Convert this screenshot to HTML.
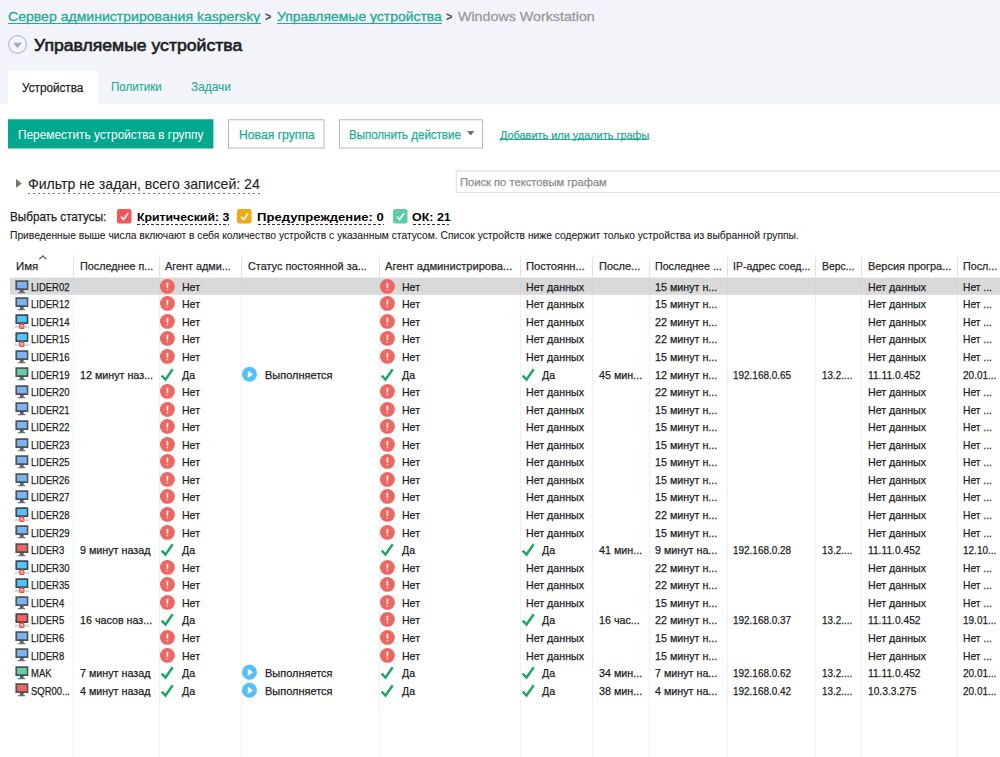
<!DOCTYPE html><html><head><meta charset="utf-8"><title>KSC</title><style>
html,body{margin:0;padding:0;}
html{width:1000px;height:757px;overflow:hidden;}
body{width:1000px;height:757px;position:relative;overflow:hidden;background:#fff;font-family:"Liberation Sans",sans-serif;}
.t{position:absolute;white-space:nowrap;line-height:1;transform-origin:0 0;-webkit-text-stroke:0.25px;}
.b{font-weight:bold;-webkit-text-stroke:0;}
.a{position:absolute;}
svg{position:absolute;overflow:visible;}
</style></head><body>

<svg width="0" height="0" style="left:0;top:0"><defs>
<g id="mon"><rect x="0.4" y="1.25" width="12.95" height="9.8" fill="#4e5459"/><rect x="4.9" y="11" width="3.7" height="2.2" fill="#5b6166"/><path d="M3.4 13.05h6.5l0.7 1.15h-7.9z" fill="#6a7075"/></g>
<g id="pc_blue"><use href="#mon"/><rect x="2.15" y="3" width="9.6" height="6.2" fill="#7ab5f0"/></g>
<g id="pc_green"><use href="#mon"/><rect x="2.15" y="3" width="9.6" height="6.2" fill="#62d0a4"/></g>
<g id="pc_red"><use href="#mon"/><rect x="2.15" y="3" width="9.6" height="6.2" fill="#f3625f"/></g>
<g id="monx"><rect x="0.4" y="0.2" width="12.95" height="9.85" rx="0.9" fill="#3b4751"/><rect x="-0.4" y="11.5" width="14.8" height="2.6" fill="#c3dbe6"/><rect x="-0.4" y="12.5" width="14.8" height="0.6" fill="#d9e8ef"/><rect x="4.1" y="9.5" width="5.3" height="5.5" rx="0.9" fill="#f0574a"/><path d="M5.5 11l2.5 2.5m0-2.5l-2.5 2.5" stroke="#fff" stroke-width="1" fill="none"/></g>
<g id="pc_bluex"><use href="#monx"/><rect x="2.1" y="1.95" width="9.65" height="6.35" fill="#50c3fb"/></g>
<g id="pc_redx"><use href="#monx"/><rect x="2.1" y="1.95" width="9.65" height="6.35" fill="#f0635e"/></g>
<g id="err"><circle cx="7.4" cy="7.4" r="7.45" fill="#ec6761"/><rect x="6.6" y="3.8" width="1.6" height="5" rx="0.5" fill="#fff"/><rect x="6.6" y="9.9" width="1.6" height="1.3" rx="0.5" fill="#fff"/></g>
<g id="ok"><path d="M1.7 8.6 L5.5 12.5 L12.7 2.2" stroke="#1aa75f" stroke-width="2.4" fill="none"/></g>
<g id="play"><circle cx="7.5" cy="7.3" r="7.5" fill="#52c0fb"/><path d="M5.8 3.7 L11.2 7.3 L5.8 10.9 Z" fill="#fff"/></g>
<g id="chk"><path d="M4 7.7 L6.6 10.4 L11.1 4.1" stroke="#fff" stroke-width="1.6" fill="none"/></g>
</defs></svg>

<svg style="left:0;top:0" width="1000" height="757" shape-rendering="geometricPrecision"><rect x="0" y="0" width="1000" height="104.4" fill="#f2f4f9"/><rect x="8" y="70.9" width="89.8" height="34" fill="#fff"/><rect x="8" y="119.25" width="205.4" height="29.25" fill="#00a88e"/><rect x="228.5" y="119.75" width="95.5" height="28.25" fill="#fff" stroke="#b1b8c3" stroke-width="1"/><rect x="339.5" y="119.75" width="143" height="28.25" fill="#fff" stroke="#b1b8c3" stroke-width="1"/><rect x="456.25" y="171" width="560" height="21.5" fill="#fff" stroke="#d9dce0" stroke-width="1"/><rect x="10" y="277.6" width="990" height="17.2" fill="#d9d9d9"/></svg>
<svg style="left:8px;top:34.7px" width="19" height="19"><circle cx="9.5" cy="9.5" r="8.9" fill="#f4f5fa" stroke="#b3bac4" stroke-width="1.1"/><path d="M5.1 7.8 h8.8 l-4.4 5.2z" fill="#a2a9b2"/></svg>
<div class="a" style="left:500px;top:139.4px;width:148.5px;height:1px;background:#22ab95"></div>
<div class="a" style="left:8px;top:22.9px;width:252.5px;height:1.1px;background:#22ab95"></div>
<div class="a" style="left:276.5px;top:22.9px;width:165.0px;height:1.1px;background:#22ab95"></div>
<svg style="left:466.5px;top:131.2px" width="8" height="6"><path d="M0 0h7.4l-3.7 4.6z" fill="#6a6d73"/></svg>
<svg style="left:15.7px;top:179.2px" width="6" height="9"><path d="M0 0v8.8l5.9-4.4z" fill="#737373"/></svg>
<div class="a" style="left:27.8px;top:192.6px;width:234px;height:1.3px;background:repeating-linear-gradient(90deg,#7a7a7a 0,#7a7a7a 2.5px,transparent 2.5px,transparent 5px)"></div>
<svg style="left:117.4px;top:209.3px" width="15" height="15"><rect width="14.5" height="14.5" rx="2.2" fill="#f0565a"/><use href="#chk"/></svg>
<svg style="left:237.4px;top:209.3px" width="15" height="15"><rect width="14.5" height="14.5" rx="2.2" fill="#eaa917"/><use href="#chk"/></svg>
<svg style="left:393px;top:209.3px" width="15" height="15"><rect width="14.5" height="14.5" rx="2.2" fill="#5ecba9"/><use href="#chk"/></svg>
<div class="a" style="left:137px;top:224px;width:91.5px;height:1px;background:repeating-linear-gradient(90deg,#333 0,#333 2.8px,transparent 2.8px,transparent 4.8px)"></div>
<div class="a" style="left:257.5px;top:224px;width:126.0px;height:1px;background:repeating-linear-gradient(90deg,#333 0,#333 2.8px,transparent 2.8px,transparent 4.8px)"></div>
<div class="a" style="left:412.5px;top:224px;width:38.0px;height:1px;background:repeating-linear-gradient(90deg,#333 0,#333 2.8px,transparent 2.8px,transparent 4.8px)"></div>
<div class="a" style="left:73px;top:255px;width:1px;height:22.6px;background:linear-gradient(#f4f4f4,#e2e2e2 30%,#e0e0e0)"></div>
<div class="a" style="left:73px;top:277.6px;width:1px;height:17.2px;background:#ccd6e3"></div>
<div class="a" style="left:73px;top:294.8px;width:1px;height:462.2px;background:#ebf1fb"></div>
<div class="a" style="left:159px;top:255px;width:1px;height:22.6px;background:linear-gradient(#f4f4f4,#e2e2e2 30%,#e0e0e0)"></div>
<div class="a" style="left:159px;top:277.6px;width:1px;height:17.2px;background:#ccd6e3"></div>
<div class="a" style="left:159px;top:294.8px;width:1px;height:462.2px;background:#ebf1fb"></div>
<div class="a" style="left:241px;top:255px;width:1px;height:22.6px;background:linear-gradient(#f4f4f4,#e2e2e2 30%,#e0e0e0)"></div>
<div class="a" style="left:241px;top:277.6px;width:1px;height:17.2px;background:#ccd6e3"></div>
<div class="a" style="left:241px;top:294.8px;width:1px;height:462.2px;background:#ebf1fb"></div>
<div class="a" style="left:379px;top:255px;width:1px;height:22.6px;background:linear-gradient(#f4f4f4,#e2e2e2 30%,#e0e0e0)"></div>
<div class="a" style="left:379px;top:277.6px;width:1px;height:17.2px;background:#ccd6e3"></div>
<div class="a" style="left:379px;top:294.8px;width:1px;height:462.2px;background:#ebf1fb"></div>
<div class="a" style="left:520px;top:255px;width:1px;height:22.6px;background:linear-gradient(#f4f4f4,#e2e2e2 30%,#e0e0e0)"></div>
<div class="a" style="left:520px;top:277.6px;width:1px;height:17.2px;background:#ccd6e3"></div>
<div class="a" style="left:520px;top:294.8px;width:1px;height:462.2px;background:#ebf1fb"></div>
<div class="a" style="left:592px;top:255px;width:1px;height:22.6px;background:linear-gradient(#f4f4f4,#e2e2e2 30%,#e0e0e0)"></div>
<div class="a" style="left:592px;top:277.6px;width:1px;height:17.2px;background:#ccd6e3"></div>
<div class="a" style="left:592px;top:294.8px;width:1px;height:462.2px;background:#ebf1fb"></div>
<div class="a" style="left:649px;top:255px;width:1px;height:22.6px;background:linear-gradient(#f4f4f4,#e2e2e2 30%,#e0e0e0)"></div>
<div class="a" style="left:649px;top:277.6px;width:1px;height:17.2px;background:#ccd6e3"></div>
<div class="a" style="left:649px;top:294.8px;width:1px;height:462.2px;background:#ebf1fb"></div>
<div class="a" style="left:727px;top:255px;width:1px;height:22.6px;background:linear-gradient(#f4f4f4,#e2e2e2 30%,#e0e0e0)"></div>
<div class="a" style="left:727px;top:277.6px;width:1px;height:17.2px;background:#ccd6e3"></div>
<div class="a" style="left:727px;top:294.8px;width:1px;height:462.2px;background:#ebf1fb"></div>
<div class="a" style="left:815px;top:255px;width:1px;height:22.6px;background:linear-gradient(#f4f4f4,#e2e2e2 30%,#e0e0e0)"></div>
<div class="a" style="left:815px;top:277.6px;width:1px;height:17.2px;background:#ccd6e3"></div>
<div class="a" style="left:815px;top:294.8px;width:1px;height:462.2px;background:#ebf1fb"></div>
<div class="a" style="left:861px;top:255px;width:1px;height:22.6px;background:linear-gradient(#f4f4f4,#e2e2e2 30%,#e0e0e0)"></div>
<div class="a" style="left:861px;top:277.6px;width:1px;height:17.2px;background:#ccd6e3"></div>
<div class="a" style="left:861px;top:294.8px;width:1px;height:462.2px;background:#ebf1fb"></div>
<div class="a" style="left:957px;top:255px;width:1px;height:22.6px;background:linear-gradient(#f4f4f4,#e2e2e2 30%,#e0e0e0)"></div>
<div class="a" style="left:957px;top:277.6px;width:1px;height:17.2px;background:#ccd6e3"></div>
<div class="a" style="left:957px;top:294.8px;width:1px;height:462.2px;background:#ebf1fb"></div>
<svg style="left:38.5px;top:254.8px" width="8" height="5"><path d="M0.3 4.3 L3.8 0.8 L7.3 4.3" stroke="#5c5c5c" stroke-width="1.25" fill="none"/></svg>
<svg style="left:14.5px;top:278.50px" width="15" height="15"><use href="#pc_blue"/></svg>
<svg style="left:160px;top:278.70px" width="15" height="15"><use href="#err"/></svg>
<svg style="left:380px;top:278.70px" width="15" height="15"><use href="#err"/></svg>
<svg style="left:14.5px;top:296.06px" width="15" height="15"><use href="#pc_blue"/></svg>
<svg style="left:160px;top:296.26px" width="15" height="15"><use href="#err"/></svg>
<svg style="left:380px;top:296.26px" width="15" height="15"><use href="#err"/></svg>
<svg style="left:14.5px;top:314.13px" width="15" height="15"><use href="#pc_bluex"/></svg>
<svg style="left:160px;top:313.83px" width="15" height="15"><use href="#err"/></svg>
<svg style="left:380px;top:313.83px" width="15" height="15"><use href="#err"/></svg>
<svg style="left:14.5px;top:331.69px" width="15" height="15"><use href="#pc_bluex"/></svg>
<svg style="left:160px;top:331.39px" width="15" height="15"><use href="#err"/></svg>
<svg style="left:380px;top:331.39px" width="15" height="15"><use href="#err"/></svg>
<svg style="left:14.5px;top:348.76px" width="15" height="15"><use href="#pc_blue"/></svg>
<svg style="left:160px;top:348.96px" width="15" height="15"><use href="#err"/></svg>
<svg style="left:380px;top:348.96px" width="15" height="15"><use href="#err"/></svg>
<svg style="left:14.5px;top:366.32px" width="15" height="15"><use href="#pc_green"/></svg>
<svg style="left:160px;top:366.52px" width="15" height="15"><use href="#ok"/></svg>
<svg style="left:242px;top:366.52px" width="15" height="15"><use href="#play"/></svg>
<svg style="left:380px;top:366.52px" width="15" height="15"><use href="#ok"/></svg>
<svg style="left:520.5px;top:366.52px" width="15" height="15"><use href="#ok"/></svg>
<svg style="left:14.5px;top:383.89px" width="15" height="15"><use href="#pc_blue"/></svg>
<svg style="left:160px;top:384.09px" width="15" height="15"><use href="#err"/></svg>
<svg style="left:380px;top:384.09px" width="15" height="15"><use href="#err"/></svg>
<svg style="left:14.5px;top:401.45px" width="15" height="15"><use href="#pc_blue"/></svg>
<svg style="left:160px;top:401.65px" width="15" height="15"><use href="#err"/></svg>
<svg style="left:380px;top:401.65px" width="15" height="15"><use href="#err"/></svg>
<svg style="left:14.5px;top:419.02px" width="15" height="15"><use href="#pc_blue"/></svg>
<svg style="left:160px;top:419.22px" width="15" height="15"><use href="#err"/></svg>
<svg style="left:380px;top:419.22px" width="15" height="15"><use href="#err"/></svg>
<svg style="left:14.5px;top:436.58px" width="15" height="15"><use href="#pc_blue"/></svg>
<svg style="left:160px;top:436.78px" width="15" height="15"><use href="#err"/></svg>
<svg style="left:380px;top:436.78px" width="15" height="15"><use href="#err"/></svg>
<svg style="left:14.5px;top:454.15px" width="15" height="15"><use href="#pc_blue"/></svg>
<svg style="left:160px;top:454.35px" width="15" height="15"><use href="#err"/></svg>
<svg style="left:380px;top:454.35px" width="15" height="15"><use href="#err"/></svg>
<svg style="left:14.5px;top:471.71px" width="15" height="15"><use href="#pc_blue"/></svg>
<svg style="left:160px;top:471.91px" width="15" height="15"><use href="#err"/></svg>
<svg style="left:380px;top:471.91px" width="15" height="15"><use href="#err"/></svg>
<svg style="left:14.5px;top:489.28px" width="15" height="15"><use href="#pc_blue"/></svg>
<svg style="left:160px;top:489.48px" width="15" height="15"><use href="#err"/></svg>
<svg style="left:380px;top:489.48px" width="15" height="15"><use href="#err"/></svg>
<svg style="left:14.5px;top:507.35px" width="15" height="15"><use href="#pc_bluex"/></svg>
<svg style="left:160px;top:507.05px" width="15" height="15"><use href="#err"/></svg>
<svg style="left:380px;top:507.05px" width="15" height="15"><use href="#err"/></svg>
<svg style="left:14.5px;top:524.41px" width="15" height="15"><use href="#pc_blue"/></svg>
<svg style="left:160px;top:524.61px" width="15" height="15"><use href="#err"/></svg>
<svg style="left:380px;top:524.61px" width="15" height="15"><use href="#err"/></svg>
<svg style="left:14.5px;top:541.97px" width="15" height="15"><use href="#pc_red"/></svg>
<svg style="left:160px;top:542.17px" width="15" height="15"><use href="#ok"/></svg>
<svg style="left:380px;top:542.17px" width="15" height="15"><use href="#ok"/></svg>
<svg style="left:520.5px;top:542.17px" width="15" height="15"><use href="#ok"/></svg>
<svg style="left:14.5px;top:560.04px" width="15" height="15"><use href="#pc_bluex"/></svg>
<svg style="left:160px;top:559.74px" width="15" height="15"><use href="#err"/></svg>
<svg style="left:380px;top:559.74px" width="15" height="15"><use href="#err"/></svg>
<svg style="left:14.5px;top:577.61px" width="15" height="15"><use href="#pc_bluex"/></svg>
<svg style="left:160px;top:577.31px" width="15" height="15"><use href="#err"/></svg>
<svg style="left:380px;top:577.31px" width="15" height="15"><use href="#err"/></svg>
<svg style="left:14.5px;top:594.67px" width="15" height="15"><use href="#pc_blue"/></svg>
<svg style="left:160px;top:594.87px" width="15" height="15"><use href="#err"/></svg>
<svg style="left:380px;top:594.87px" width="15" height="15"><use href="#err"/></svg>
<svg style="left:14.5px;top:612.73px" width="15" height="15"><use href="#pc_redx"/></svg>
<svg style="left:160px;top:612.43px" width="15" height="15"><use href="#ok"/></svg>
<svg style="left:380px;top:612.43px" width="15" height="15"><use href="#err"/></svg>
<svg style="left:520.5px;top:612.43px" width="15" height="15"><use href="#ok"/></svg>
<svg style="left:14.5px;top:629.80px" width="15" height="15"><use href="#pc_blue"/></svg>
<svg style="left:160px;top:630.00px" width="15" height="15"><use href="#err"/></svg>
<svg style="left:380px;top:630.00px" width="15" height="15"><use href="#err"/></svg>
<svg style="left:14.5px;top:647.37px" width="15" height="15"><use href="#pc_blue"/></svg>
<svg style="left:160px;top:647.57px" width="15" height="15"><use href="#err"/></svg>
<svg style="left:380px;top:647.57px" width="15" height="15"><use href="#err"/></svg>
<svg style="left:14.5px;top:664.93px" width="15" height="15"><use href="#pc_green"/></svg>
<svg style="left:160px;top:665.13px" width="15" height="15"><use href="#ok"/></svg>
<svg style="left:242px;top:665.13px" width="15" height="15"><use href="#play"/></svg>
<svg style="left:380px;top:665.13px" width="15" height="15"><use href="#ok"/></svg>
<svg style="left:520.5px;top:665.13px" width="15" height="15"><use href="#ok"/></svg>
<svg style="left:14.5px;top:682.49px" width="15" height="15"><use href="#pc_red"/></svg>
<svg style="left:160px;top:682.69px" width="15" height="15"><use href="#ok"/></svg>
<svg style="left:242px;top:682.69px" width="15" height="15"><use href="#play"/></svg>
<svg style="left:380px;top:682.69px" width="15" height="15"><use href="#ok"/></svg>
<svg style="left:520.5px;top:682.69px" width="15" height="15"><use href="#ok"/></svg>
<span class="t" style="left:8.20px;top:9.81px;font-size:13.6px;color:#22ab95;transform:scaleX(1.0345);-webkit-text-stroke:0.3px;">Сервер администрирования kaspersky</span>
<span class="t b" style="left:265.10px;top:10.60px;font-size:12.5px;color:#4a4a4a;transform:scaleX(0.8615);">></span>
<span class="t" style="left:276.60px;top:9.81px;font-size:13.6px;color:#22ab95;transform:scaleX(1.0251);-webkit-text-stroke:0.3px;">Управляемые устройства</span>
<span class="t b" style="left:446.10px;top:10.60px;font-size:12.5px;color:#4a4a4a;transform:scaleX(0.8615);">></span>
<span class="t" style="left:457.60px;top:9.81px;font-size:13.6px;color:#9a9a9a;transform:scaleX(1.0487);-webkit-text-stroke:0.3px;">Windows Workstation</span>
<span class="t" style="left:34.20px;top:37.81px;font-size:16px;color:#1e1e1e;transform:scaleX(1.1003);-webkit-text-stroke:0.6px;">Управляемые устройства</span>
<span class="t" style="left:22.10px;top:82.30px;font-size:12.5px;color:#1e1e1e;transform:scaleX(0.9372);">Устройства</span>
<span class="t" style="left:110.60px;top:81.01px;font-size:12.5px;color:#22ab95;transform:scaleX(0.9218);-webkit-text-stroke:0.1px;">Политики</span>
<span class="t" style="left:190.60px;top:81.01px;font-size:12.5px;color:#22ab95;transform:scaleX(0.9483);-webkit-text-stroke:0.1px;">Задачи</span>
<span class="t" style="left:18.10px;top:129.10px;font-size:12.5px;color:#ffffff;transform:scaleX(0.9481);-webkit-text-stroke:0;">Переместить устройства в группу</span>
<span class="t" style="left:238.60px;top:129.21px;font-size:12.5px;color:#22ab95;transform:scaleX(0.9743);">Новая группа</span>
<span class="t" style="left:349.10px;top:129.21px;font-size:12.5px;color:#22ab95;transform:scaleX(0.9206);">Выполнить действие</span>
<span class="t" style="left:499.60px;top:129.61px;font-size:11.5px;color:#22ab95;transform:scaleX(0.9477);">Добавить или удалить графы</span>
<span class="t" style="left:27.60px;top:177.00px;font-size:14.3px;color:#1e1e1e;transform:scaleX(0.9864);-webkit-text-stroke:0.1px;">Фильтр не задан, всего записей: 24</span>
<span class="t" style="left:459.60px;top:176.50px;font-size:11.5px;color:#8c8c8c;transform:scaleX(0.9716);">Поиск по текстовым графам</span>
<span class="t" style="left:9.60px;top:210.51px;font-size:12px;color:#1e1e1e;transform:scaleX(0.9736);">Выбрать статусы:</span>
<span class="t b" style="left:136.60px;top:211.50px;font-size:11.5px;color:#000;transform:scaleX(1.0676);">Критический: 3</span>
<span class="t b" style="left:257.10px;top:211.50px;font-size:11.5px;color:#000;transform:scaleX(1.1380);">Предупреждение: 0</span>
<span class="t b" style="left:412.10px;top:211.50px;font-size:11.5px;color:#000;transform:scaleX(1.0844);">ОК: 21</span>
<span class="t" style="left:9.60px;top:230.71px;font-size:10.3px;color:#1e1e1e;transform:scaleX(0.9990);-webkit-text-stroke:0.1px;">Приведенные выше числа включают в себя количество устройств с указанным статусом. Список устройств ниже содержит только устройства из выбранной группы.</span>
<span class="t" style="left:15.60px;top:260.21px;font-size:11.6px;color:#2a2a2a;transform:scaleX(0.9870);">Имя</span>
<span class="t" style="left:79.60px;top:260.21px;font-size:11.6px;color:#2a2a2a;transform:scaleX(0.9306);">Последнее п...</span>
<span class="t" style="left:165.10px;top:260.21px;font-size:11.6px;color:#2a2a2a;transform:scaleX(0.9344);">Агент адми...</span>
<span class="t" style="left:247.60px;top:260.21px;font-size:11.6px;color:#2a2a2a;transform:scaleX(0.9377);">Статус постоянной за...</span>
<span class="t" style="left:385.10px;top:260.21px;font-size:11.6px;color:#2a2a2a;transform:scaleX(0.9593);">Агент администрирова...</span>
<span class="t" style="left:525.60px;top:260.21px;font-size:11.6px;color:#2a2a2a;transform:scaleX(0.9647);">Постоянн...</span>
<span class="t" style="left:598.60px;top:260.21px;font-size:11.6px;color:#2a2a2a;transform:scaleX(0.9501);">После...</span>
<span class="t" style="left:655.10px;top:260.21px;font-size:11.6px;color:#2a2a2a;transform:scaleX(0.9216);">Последнее ...</span>
<span class="t" style="left:732.60px;top:260.21px;font-size:11.6px;color:#2a2a2a;transform:scaleX(0.9099);">IP-адрес соед...</span>
<span class="t" style="left:821.60px;top:260.21px;font-size:11.6px;color:#2a2a2a;transform:scaleX(0.8949);">Верс...</span>
<span class="t" style="left:867.60px;top:260.21px;font-size:11.6px;color:#2a2a2a;transform:scaleX(0.9426);">Версия програ...</span>
<span class="t" style="left:963.10px;top:260.21px;font-size:11.6px;color:#2a2a2a;transform:scaleX(0.9266);">Посл...</span>
<span class="t" style="left:30.80px;top:280.71px;font-size:11.6px;color:#1c1c1c;transform:scaleX(0.8180);">LIDER02</span>
<span class="t" style="left:182.10px;top:280.71px;font-size:11.6px;color:#1c1c1c;transform:scaleX(0.9100);">Нет</span>
<span class="t" style="left:402.10px;top:280.71px;font-size:11.6px;color:#1c1c1c;transform:scaleX(0.9100);">Нет</span>
<span class="t" style="left:525.60px;top:280.71px;font-size:11.6px;color:#1c1c1c;transform:scaleX(0.9190);">Нет данных</span>
<span class="t" style="left:655.10px;top:280.71px;font-size:11.6px;color:#1c1c1c;transform:scaleX(0.9250);">15 минут н...</span>
<span class="t" style="left:867.60px;top:280.71px;font-size:11.6px;color:#1c1c1c;transform:scaleX(0.9190);">Нет данных</span>
<span class="t" style="left:963.10px;top:280.71px;font-size:11.6px;color:#1c1c1c;transform:scaleX(0.8850);">Нет ...</span>
<span class="t" style="left:30.80px;top:298.27px;font-size:11.6px;color:#1c1c1c;transform:scaleX(0.8180);">LIDER12</span>
<span class="t" style="left:182.10px;top:298.27px;font-size:11.6px;color:#1c1c1c;transform:scaleX(0.9100);">Нет</span>
<span class="t" style="left:402.10px;top:298.27px;font-size:11.6px;color:#1c1c1c;transform:scaleX(0.9100);">Нет</span>
<span class="t" style="left:525.60px;top:298.27px;font-size:11.6px;color:#1c1c1c;transform:scaleX(0.9190);">Нет данных</span>
<span class="t" style="left:655.10px;top:298.27px;font-size:11.6px;color:#1c1c1c;transform:scaleX(0.9250);">15 минут н...</span>
<span class="t" style="left:867.60px;top:298.27px;font-size:11.6px;color:#1c1c1c;transform:scaleX(0.9190);">Нет данных</span>
<span class="t" style="left:963.10px;top:298.27px;font-size:11.6px;color:#1c1c1c;transform:scaleX(0.8850);">Нет ...</span>
<span class="t" style="left:30.80px;top:315.84px;font-size:11.6px;color:#1c1c1c;transform:scaleX(0.8180);">LIDER14</span>
<span class="t" style="left:182.10px;top:315.84px;font-size:11.6px;color:#1c1c1c;transform:scaleX(0.9100);">Нет</span>
<span class="t" style="left:402.10px;top:315.84px;font-size:11.6px;color:#1c1c1c;transform:scaleX(0.9100);">Нет</span>
<span class="t" style="left:525.60px;top:315.84px;font-size:11.6px;color:#1c1c1c;transform:scaleX(0.9190);">Нет данных</span>
<span class="t" style="left:655.10px;top:315.84px;font-size:11.6px;color:#1c1c1c;transform:scaleX(0.9250);">22 минут н...</span>
<span class="t" style="left:867.60px;top:315.84px;font-size:11.6px;color:#1c1c1c;transform:scaleX(0.9190);">Нет данных</span>
<span class="t" style="left:963.10px;top:315.84px;font-size:11.6px;color:#1c1c1c;transform:scaleX(0.8850);">Нет ...</span>
<span class="t" style="left:30.80px;top:333.39px;font-size:11.6px;color:#1c1c1c;transform:scaleX(0.8180);">LIDER15</span>
<span class="t" style="left:182.10px;top:333.39px;font-size:11.6px;color:#1c1c1c;transform:scaleX(0.9100);">Нет</span>
<span class="t" style="left:402.10px;top:333.39px;font-size:11.6px;color:#1c1c1c;transform:scaleX(0.9100);">Нет</span>
<span class="t" style="left:525.60px;top:333.39px;font-size:11.6px;color:#1c1c1c;transform:scaleX(0.9190);">Нет данных</span>
<span class="t" style="left:655.10px;top:333.39px;font-size:11.6px;color:#1c1c1c;transform:scaleX(0.9250);">22 минут н...</span>
<span class="t" style="left:867.60px;top:333.39px;font-size:11.6px;color:#1c1c1c;transform:scaleX(0.9190);">Нет данных</span>
<span class="t" style="left:963.10px;top:333.39px;font-size:11.6px;color:#1c1c1c;transform:scaleX(0.8850);">Нет ...</span>
<span class="t" style="left:30.80px;top:350.98px;font-size:11.6px;color:#1c1c1c;transform:scaleX(0.8180);">LIDER16</span>
<span class="t" style="left:182.10px;top:350.98px;font-size:11.6px;color:#1c1c1c;transform:scaleX(0.9100);">Нет</span>
<span class="t" style="left:402.10px;top:350.98px;font-size:11.6px;color:#1c1c1c;transform:scaleX(0.9100);">Нет</span>
<span class="t" style="left:525.60px;top:350.98px;font-size:11.6px;color:#1c1c1c;transform:scaleX(0.9190);">Нет данных</span>
<span class="t" style="left:655.10px;top:350.98px;font-size:11.6px;color:#1c1c1c;transform:scaleX(0.9250);">15 минут н...</span>
<span class="t" style="left:867.60px;top:350.98px;font-size:11.6px;color:#1c1c1c;transform:scaleX(0.9190);">Нет данных</span>
<span class="t" style="left:963.10px;top:350.98px;font-size:11.6px;color:#1c1c1c;transform:scaleX(0.8850);">Нет ...</span>
<span class="t" style="left:30.80px;top:368.53px;font-size:11.6px;color:#1c1c1c;transform:scaleX(0.8180);">LIDER19</span>
<span class="t" style="left:79.60px;top:368.53px;font-size:11.6px;color:#1c1c1c;transform:scaleX(0.9250);">12 минут наз...</span>
<span class="t" style="left:182.10px;top:368.53px;font-size:11.6px;color:#1c1c1c;transform:scaleX(0.9100);">Да</span>
<span class="t" style="left:264.60px;top:368.53px;font-size:11.6px;color:#1c1c1c;transform:scaleX(0.9460);">Выполняется</span>
<span class="t" style="left:402.10px;top:368.53px;font-size:11.6px;color:#1c1c1c;transform:scaleX(0.9100);">Да</span>
<span class="t" style="left:542.10px;top:368.53px;font-size:11.6px;color:#1c1c1c;transform:scaleX(0.9100);">Да</span>
<span class="t" style="left:598.60px;top:368.53px;font-size:11.6px;color:#1c1c1c;transform:scaleX(0.9250);">45 мин...</span>
<span class="t" style="left:655.10px;top:368.53px;font-size:11.6px;color:#1c1c1c;transform:scaleX(0.9250);">12 минут н...</span>
<span class="t" style="left:733.10px;top:368.53px;font-size:11.6px;color:#1c1c1c;transform:scaleX(0.8580);">192.168.0.65</span>
<span class="t" style="left:822.10px;top:368.53px;font-size:11.6px;color:#1c1c1c;transform:scaleX(0.8500);">13.2....</span>
<span class="t" style="left:867.60px;top:368.53px;font-size:11.6px;color:#1c1c1c;transform:scaleX(0.8820);">11.11.0.452</span>
<span class="t" style="left:963.10px;top:368.53px;font-size:11.6px;color:#1c1c1c;transform:scaleX(0.8620);">20.01...</span>
<span class="t" style="left:30.80px;top:386.09px;font-size:11.6px;color:#1c1c1c;transform:scaleX(0.8180);">LIDER20</span>
<span class="t" style="left:182.10px;top:386.09px;font-size:11.6px;color:#1c1c1c;transform:scaleX(0.9100);">Нет</span>
<span class="t" style="left:402.10px;top:386.09px;font-size:11.6px;color:#1c1c1c;transform:scaleX(0.9100);">Нет</span>
<span class="t" style="left:525.60px;top:386.09px;font-size:11.6px;color:#1c1c1c;transform:scaleX(0.9190);">Нет данных</span>
<span class="t" style="left:655.10px;top:386.09px;font-size:11.6px;color:#1c1c1c;transform:scaleX(0.9250);">22 минут н...</span>
<span class="t" style="left:867.60px;top:386.09px;font-size:11.6px;color:#1c1c1c;transform:scaleX(0.9190);">Нет данных</span>
<span class="t" style="left:963.10px;top:386.09px;font-size:11.6px;color:#1c1c1c;transform:scaleX(0.8850);">Нет ...</span>
<span class="t" style="left:30.80px;top:403.66px;font-size:11.6px;color:#1c1c1c;transform:scaleX(0.8180);">LIDER21</span>
<span class="t" style="left:182.10px;top:403.66px;font-size:11.6px;color:#1c1c1c;transform:scaleX(0.9100);">Нет</span>
<span class="t" style="left:402.10px;top:403.66px;font-size:11.6px;color:#1c1c1c;transform:scaleX(0.9100);">Нет</span>
<span class="t" style="left:525.60px;top:403.66px;font-size:11.6px;color:#1c1c1c;transform:scaleX(0.9190);">Нет данных</span>
<span class="t" style="left:655.10px;top:403.66px;font-size:11.6px;color:#1c1c1c;transform:scaleX(0.9250);">15 минут н...</span>
<span class="t" style="left:867.60px;top:403.66px;font-size:11.6px;color:#1c1c1c;transform:scaleX(0.9190);">Нет данных</span>
<span class="t" style="left:963.10px;top:403.66px;font-size:11.6px;color:#1c1c1c;transform:scaleX(0.8850);">Нет ...</span>
<span class="t" style="left:30.80px;top:421.23px;font-size:11.6px;color:#1c1c1c;transform:scaleX(0.8180);">LIDER22</span>
<span class="t" style="left:182.10px;top:421.23px;font-size:11.6px;color:#1c1c1c;transform:scaleX(0.9100);">Нет</span>
<span class="t" style="left:402.10px;top:421.23px;font-size:11.6px;color:#1c1c1c;transform:scaleX(0.9100);">Нет</span>
<span class="t" style="left:525.60px;top:421.23px;font-size:11.6px;color:#1c1c1c;transform:scaleX(0.9190);">Нет данных</span>
<span class="t" style="left:655.10px;top:421.23px;font-size:11.6px;color:#1c1c1c;transform:scaleX(0.9250);">15 минут н...</span>
<span class="t" style="left:867.60px;top:421.23px;font-size:11.6px;color:#1c1c1c;transform:scaleX(0.9190);">Нет данных</span>
<span class="t" style="left:963.10px;top:421.23px;font-size:11.6px;color:#1c1c1c;transform:scaleX(0.8850);">Нет ...</span>
<span class="t" style="left:30.80px;top:438.78px;font-size:11.6px;color:#1c1c1c;transform:scaleX(0.8180);">LIDER23</span>
<span class="t" style="left:182.10px;top:438.78px;font-size:11.6px;color:#1c1c1c;transform:scaleX(0.9100);">Нет</span>
<span class="t" style="left:402.10px;top:438.78px;font-size:11.6px;color:#1c1c1c;transform:scaleX(0.9100);">Нет</span>
<span class="t" style="left:525.60px;top:438.78px;font-size:11.6px;color:#1c1c1c;transform:scaleX(0.9190);">Нет данных</span>
<span class="t" style="left:655.10px;top:438.78px;font-size:11.6px;color:#1c1c1c;transform:scaleX(0.9250);">15 минут н...</span>
<span class="t" style="left:867.60px;top:438.78px;font-size:11.6px;color:#1c1c1c;transform:scaleX(0.9190);">Нет данных</span>
<span class="t" style="left:963.10px;top:438.78px;font-size:11.6px;color:#1c1c1c;transform:scaleX(0.8850);">Нет ...</span>
<span class="t" style="left:30.80px;top:456.36px;font-size:11.6px;color:#1c1c1c;transform:scaleX(0.8180);">LIDER25</span>
<span class="t" style="left:182.10px;top:456.36px;font-size:11.6px;color:#1c1c1c;transform:scaleX(0.9100);">Нет</span>
<span class="t" style="left:402.10px;top:456.36px;font-size:11.6px;color:#1c1c1c;transform:scaleX(0.9100);">Нет</span>
<span class="t" style="left:525.60px;top:456.36px;font-size:11.6px;color:#1c1c1c;transform:scaleX(0.9190);">Нет данных</span>
<span class="t" style="left:655.10px;top:456.36px;font-size:11.6px;color:#1c1c1c;transform:scaleX(0.9250);">15 минут н...</span>
<span class="t" style="left:867.60px;top:456.36px;font-size:11.6px;color:#1c1c1c;transform:scaleX(0.9190);">Нет данных</span>
<span class="t" style="left:963.10px;top:456.36px;font-size:11.6px;color:#1c1c1c;transform:scaleX(0.8850);">Нет ...</span>
<span class="t" style="left:30.80px;top:473.92px;font-size:11.6px;color:#1c1c1c;transform:scaleX(0.8180);">LIDER26</span>
<span class="t" style="left:182.10px;top:473.92px;font-size:11.6px;color:#1c1c1c;transform:scaleX(0.9100);">Нет</span>
<span class="t" style="left:402.10px;top:473.92px;font-size:11.6px;color:#1c1c1c;transform:scaleX(0.9100);">Нет</span>
<span class="t" style="left:525.60px;top:473.92px;font-size:11.6px;color:#1c1c1c;transform:scaleX(0.9190);">Нет данных</span>
<span class="t" style="left:655.10px;top:473.92px;font-size:11.6px;color:#1c1c1c;transform:scaleX(0.9250);">15 минут н...</span>
<span class="t" style="left:867.60px;top:473.92px;font-size:11.6px;color:#1c1c1c;transform:scaleX(0.9190);">Нет данных</span>
<span class="t" style="left:963.10px;top:473.92px;font-size:11.6px;color:#1c1c1c;transform:scaleX(0.8850);">Нет ...</span>
<span class="t" style="left:30.80px;top:491.48px;font-size:11.6px;color:#1c1c1c;transform:scaleX(0.8180);">LIDER27</span>
<span class="t" style="left:182.10px;top:491.48px;font-size:11.6px;color:#1c1c1c;transform:scaleX(0.9100);">Нет</span>
<span class="t" style="left:402.10px;top:491.48px;font-size:11.6px;color:#1c1c1c;transform:scaleX(0.9100);">Нет</span>
<span class="t" style="left:525.60px;top:491.48px;font-size:11.6px;color:#1c1c1c;transform:scaleX(0.9190);">Нет данных</span>
<span class="t" style="left:655.10px;top:491.48px;font-size:11.6px;color:#1c1c1c;transform:scaleX(0.9250);">15 минут н...</span>
<span class="t" style="left:867.60px;top:491.48px;font-size:11.6px;color:#1c1c1c;transform:scaleX(0.9190);">Нет данных</span>
<span class="t" style="left:963.10px;top:491.48px;font-size:11.6px;color:#1c1c1c;transform:scaleX(0.8850);">Нет ...</span>
<span class="t" style="left:30.80px;top:509.05px;font-size:11.6px;color:#1c1c1c;transform:scaleX(0.8180);">LIDER28</span>
<span class="t" style="left:182.10px;top:509.05px;font-size:11.6px;color:#1c1c1c;transform:scaleX(0.9100);">Нет</span>
<span class="t" style="left:402.10px;top:509.05px;font-size:11.6px;color:#1c1c1c;transform:scaleX(0.9100);">Нет</span>
<span class="t" style="left:525.60px;top:509.05px;font-size:11.6px;color:#1c1c1c;transform:scaleX(0.9190);">Нет данных</span>
<span class="t" style="left:655.10px;top:509.05px;font-size:11.6px;color:#1c1c1c;transform:scaleX(0.9250);">22 минут н...</span>
<span class="t" style="left:867.60px;top:509.05px;font-size:11.6px;color:#1c1c1c;transform:scaleX(0.9190);">Нет данных</span>
<span class="t" style="left:963.10px;top:509.05px;font-size:11.6px;color:#1c1c1c;transform:scaleX(0.8850);">Нет ...</span>
<span class="t" style="left:30.80px;top:526.62px;font-size:11.6px;color:#1c1c1c;transform:scaleX(0.8180);">LIDER29</span>
<span class="t" style="left:182.10px;top:526.62px;font-size:11.6px;color:#1c1c1c;transform:scaleX(0.9100);">Нет</span>
<span class="t" style="left:402.10px;top:526.62px;font-size:11.6px;color:#1c1c1c;transform:scaleX(0.9100);">Нет</span>
<span class="t" style="left:525.60px;top:526.62px;font-size:11.6px;color:#1c1c1c;transform:scaleX(0.9190);">Нет данных</span>
<span class="t" style="left:655.10px;top:526.62px;font-size:11.6px;color:#1c1c1c;transform:scaleX(0.9250);">15 минут н...</span>
<span class="t" style="left:867.60px;top:526.62px;font-size:11.6px;color:#1c1c1c;transform:scaleX(0.9190);">Нет данных</span>
<span class="t" style="left:963.10px;top:526.62px;font-size:11.6px;color:#1c1c1c;transform:scaleX(0.8850);">Нет ...</span>
<span class="t" style="left:30.80px;top:544.17px;font-size:11.6px;color:#1c1c1c;transform:scaleX(0.8180);">LIDER3</span>
<span class="t" style="left:79.60px;top:544.17px;font-size:11.6px;color:#1c1c1c;transform:scaleX(0.9250);">9 минут назад</span>
<span class="t" style="left:182.10px;top:544.17px;font-size:11.6px;color:#1c1c1c;transform:scaleX(0.9100);">Да</span>
<span class="t" style="left:402.10px;top:544.17px;font-size:11.6px;color:#1c1c1c;transform:scaleX(0.9100);">Да</span>
<span class="t" style="left:542.10px;top:544.17px;font-size:11.6px;color:#1c1c1c;transform:scaleX(0.9100);">Да</span>
<span class="t" style="left:598.60px;top:544.17px;font-size:11.6px;color:#1c1c1c;transform:scaleX(0.9250);">41 мин...</span>
<span class="t" style="left:655.10px;top:544.17px;font-size:11.6px;color:#1c1c1c;transform:scaleX(0.9250);">9 минут на...</span>
<span class="t" style="left:733.10px;top:544.17px;font-size:11.6px;color:#1c1c1c;transform:scaleX(0.8580);">192.168.0.28</span>
<span class="t" style="left:822.10px;top:544.17px;font-size:11.6px;color:#1c1c1c;transform:scaleX(0.8500);">13.2....</span>
<span class="t" style="left:867.60px;top:544.17px;font-size:11.6px;color:#1c1c1c;transform:scaleX(0.8820);">11.11.0.452</span>
<span class="t" style="left:963.10px;top:544.17px;font-size:11.6px;color:#1c1c1c;transform:scaleX(0.8620);">12.10...</span>
<span class="t" style="left:30.80px;top:561.75px;font-size:11.6px;color:#1c1c1c;transform:scaleX(0.8180);">LIDER30</span>
<span class="t" style="left:182.10px;top:561.75px;font-size:11.6px;color:#1c1c1c;transform:scaleX(0.9100);">Нет</span>
<span class="t" style="left:402.10px;top:561.75px;font-size:11.6px;color:#1c1c1c;transform:scaleX(0.9100);">Нет</span>
<span class="t" style="left:525.60px;top:561.75px;font-size:11.6px;color:#1c1c1c;transform:scaleX(0.9190);">Нет данных</span>
<span class="t" style="left:655.10px;top:561.75px;font-size:11.6px;color:#1c1c1c;transform:scaleX(0.9250);">22 минут н...</span>
<span class="t" style="left:867.60px;top:561.75px;font-size:11.6px;color:#1c1c1c;transform:scaleX(0.9190);">Нет данных</span>
<span class="t" style="left:963.10px;top:561.75px;font-size:11.6px;color:#1c1c1c;transform:scaleX(0.8850);">Нет ...</span>
<span class="t" style="left:30.80px;top:579.31px;font-size:11.6px;color:#1c1c1c;transform:scaleX(0.8180);">LIDER35</span>
<span class="t" style="left:182.10px;top:579.31px;font-size:11.6px;color:#1c1c1c;transform:scaleX(0.9100);">Нет</span>
<span class="t" style="left:402.10px;top:579.31px;font-size:11.6px;color:#1c1c1c;transform:scaleX(0.9100);">Нет</span>
<span class="t" style="left:525.60px;top:579.31px;font-size:11.6px;color:#1c1c1c;transform:scaleX(0.9190);">Нет данных</span>
<span class="t" style="left:655.10px;top:579.31px;font-size:11.6px;color:#1c1c1c;transform:scaleX(0.9250);">22 минут н...</span>
<span class="t" style="left:867.60px;top:579.31px;font-size:11.6px;color:#1c1c1c;transform:scaleX(0.9190);">Нет данных</span>
<span class="t" style="left:963.10px;top:579.31px;font-size:11.6px;color:#1c1c1c;transform:scaleX(0.8850);">Нет ...</span>
<span class="t" style="left:30.80px;top:596.87px;font-size:11.6px;color:#1c1c1c;transform:scaleX(0.8180);">LIDER4</span>
<span class="t" style="left:182.10px;top:596.87px;font-size:11.6px;color:#1c1c1c;transform:scaleX(0.9100);">Нет</span>
<span class="t" style="left:402.10px;top:596.87px;font-size:11.6px;color:#1c1c1c;transform:scaleX(0.9100);">Нет</span>
<span class="t" style="left:525.60px;top:596.87px;font-size:11.6px;color:#1c1c1c;transform:scaleX(0.9190);">Нет данных</span>
<span class="t" style="left:655.10px;top:596.87px;font-size:11.6px;color:#1c1c1c;transform:scaleX(0.9250);">15 минут н...</span>
<span class="t" style="left:867.60px;top:596.87px;font-size:11.6px;color:#1c1c1c;transform:scaleX(0.9190);">Нет данных</span>
<span class="t" style="left:963.10px;top:596.87px;font-size:11.6px;color:#1c1c1c;transform:scaleX(0.8850);">Нет ...</span>
<span class="t" style="left:30.80px;top:614.44px;font-size:11.6px;color:#1c1c1c;transform:scaleX(0.8180);">LIDER5</span>
<span class="t" style="left:79.60px;top:614.44px;font-size:11.6px;color:#1c1c1c;transform:scaleX(0.9250);">16 часов наз...</span>
<span class="t" style="left:182.10px;top:614.44px;font-size:11.6px;color:#1c1c1c;transform:scaleX(0.9100);">Да</span>
<span class="t" style="left:402.10px;top:614.44px;font-size:11.6px;color:#1c1c1c;transform:scaleX(0.9100);">Нет</span>
<span class="t" style="left:542.10px;top:614.44px;font-size:11.6px;color:#1c1c1c;transform:scaleX(0.9100);">Да</span>
<span class="t" style="left:598.60px;top:614.44px;font-size:11.6px;color:#1c1c1c;transform:scaleX(0.9250);">16 час...</span>
<span class="t" style="left:655.10px;top:614.44px;font-size:11.6px;color:#1c1c1c;transform:scaleX(0.9250);">22 минут н...</span>
<span class="t" style="left:733.10px;top:614.44px;font-size:11.6px;color:#1c1c1c;transform:scaleX(0.8580);">192.168.0.37</span>
<span class="t" style="left:822.10px;top:614.44px;font-size:11.6px;color:#1c1c1c;transform:scaleX(0.8500);">13.2....</span>
<span class="t" style="left:867.60px;top:614.44px;font-size:11.6px;color:#1c1c1c;transform:scaleX(0.8820);">11.11.0.452</span>
<span class="t" style="left:963.10px;top:614.44px;font-size:11.6px;color:#1c1c1c;transform:scaleX(0.8620);">19.01...</span>
<span class="t" style="left:30.80px;top:632.01px;font-size:11.6px;color:#1c1c1c;transform:scaleX(0.8180);">LIDER6</span>
<span class="t" style="left:182.10px;top:632.01px;font-size:11.6px;color:#1c1c1c;transform:scaleX(0.9100);">Нет</span>
<span class="t" style="left:402.10px;top:632.01px;font-size:11.6px;color:#1c1c1c;transform:scaleX(0.9100);">Нет</span>
<span class="t" style="left:525.60px;top:632.01px;font-size:11.6px;color:#1c1c1c;transform:scaleX(0.9190);">Нет данных</span>
<span class="t" style="left:655.10px;top:632.01px;font-size:11.6px;color:#1c1c1c;transform:scaleX(0.9250);">15 минут н...</span>
<span class="t" style="left:867.60px;top:632.01px;font-size:11.6px;color:#1c1c1c;transform:scaleX(0.9190);">Нет данных</span>
<span class="t" style="left:963.10px;top:632.01px;font-size:11.6px;color:#1c1c1c;transform:scaleX(0.8850);">Нет ...</span>
<span class="t" style="left:30.80px;top:649.56px;font-size:11.6px;color:#1c1c1c;transform:scaleX(0.8180);">LIDER8</span>
<span class="t" style="left:182.10px;top:649.56px;font-size:11.6px;color:#1c1c1c;transform:scaleX(0.9100);">Нет</span>
<span class="t" style="left:402.10px;top:649.56px;font-size:11.6px;color:#1c1c1c;transform:scaleX(0.9100);">Нет</span>
<span class="t" style="left:525.60px;top:649.56px;font-size:11.6px;color:#1c1c1c;transform:scaleX(0.9190);">Нет данных</span>
<span class="t" style="left:655.10px;top:649.56px;font-size:11.6px;color:#1c1c1c;transform:scaleX(0.9250);">15 минут н...</span>
<span class="t" style="left:867.60px;top:649.56px;font-size:11.6px;color:#1c1c1c;transform:scaleX(0.9190);">Нет данных</span>
<span class="t" style="left:963.10px;top:649.56px;font-size:11.6px;color:#1c1c1c;transform:scaleX(0.8850);">Нет ...</span>
<span class="t" style="left:30.80px;top:667.14px;font-size:11.6px;color:#1c1c1c;transform:scaleX(0.8180);">MAK</span>
<span class="t" style="left:79.60px;top:667.14px;font-size:11.6px;color:#1c1c1c;transform:scaleX(0.9250);">7 минут назад</span>
<span class="t" style="left:182.10px;top:667.14px;font-size:11.6px;color:#1c1c1c;transform:scaleX(0.9100);">Да</span>
<span class="t" style="left:264.60px;top:667.14px;font-size:11.6px;color:#1c1c1c;transform:scaleX(0.9460);">Выполняется</span>
<span class="t" style="left:402.10px;top:667.14px;font-size:11.6px;color:#1c1c1c;transform:scaleX(0.9100);">Да</span>
<span class="t" style="left:542.10px;top:667.14px;font-size:11.6px;color:#1c1c1c;transform:scaleX(0.9100);">Да</span>
<span class="t" style="left:598.60px;top:667.14px;font-size:11.6px;color:#1c1c1c;transform:scaleX(0.9250);">34 мин...</span>
<span class="t" style="left:655.10px;top:667.14px;font-size:11.6px;color:#1c1c1c;transform:scaleX(0.9250);">7 минут на...</span>
<span class="t" style="left:733.10px;top:667.14px;font-size:11.6px;color:#1c1c1c;transform:scaleX(0.8580);">192.168.0.62</span>
<span class="t" style="left:822.10px;top:667.14px;font-size:11.6px;color:#1c1c1c;transform:scaleX(0.8500);">13.2....</span>
<span class="t" style="left:867.60px;top:667.14px;font-size:11.6px;color:#1c1c1c;transform:scaleX(0.8820);">11.11.0.452</span>
<span class="t" style="left:963.10px;top:667.14px;font-size:11.6px;color:#1c1c1c;transform:scaleX(0.8620);">20.01...</span>
<span class="t" style="left:30.80px;top:684.70px;font-size:11.6px;color:#1c1c1c;transform:scaleX(0.8180);">SQR00...</span>
<span class="t" style="left:79.60px;top:684.70px;font-size:11.6px;color:#1c1c1c;transform:scaleX(0.9250);">4 минут назад</span>
<span class="t" style="left:182.10px;top:684.70px;font-size:11.6px;color:#1c1c1c;transform:scaleX(0.9100);">Да</span>
<span class="t" style="left:264.60px;top:684.70px;font-size:11.6px;color:#1c1c1c;transform:scaleX(0.9460);">Выполняется</span>
<span class="t" style="left:402.10px;top:684.70px;font-size:11.6px;color:#1c1c1c;transform:scaleX(0.9100);">Да</span>
<span class="t" style="left:542.10px;top:684.70px;font-size:11.6px;color:#1c1c1c;transform:scaleX(0.9100);">Да</span>
<span class="t" style="left:598.60px;top:684.70px;font-size:11.6px;color:#1c1c1c;transform:scaleX(0.9250);">38 мин...</span>
<span class="t" style="left:655.10px;top:684.70px;font-size:11.6px;color:#1c1c1c;transform:scaleX(0.9250);">4 минут на...</span>
<span class="t" style="left:733.10px;top:684.70px;font-size:11.6px;color:#1c1c1c;transform:scaleX(0.8580);">192.168.0.42</span>
<span class="t" style="left:822.10px;top:684.70px;font-size:11.6px;color:#1c1c1c;transform:scaleX(0.8500);">13.2....</span>
<span class="t" style="left:867.60px;top:684.70px;font-size:11.6px;color:#1c1c1c;transform:scaleX(0.8820);">10.3.3.275</span>
<span class="t" style="left:963.10px;top:684.70px;font-size:11.6px;color:#1c1c1c;transform:scaleX(0.8620);">20.01...</span>
</body></html>
